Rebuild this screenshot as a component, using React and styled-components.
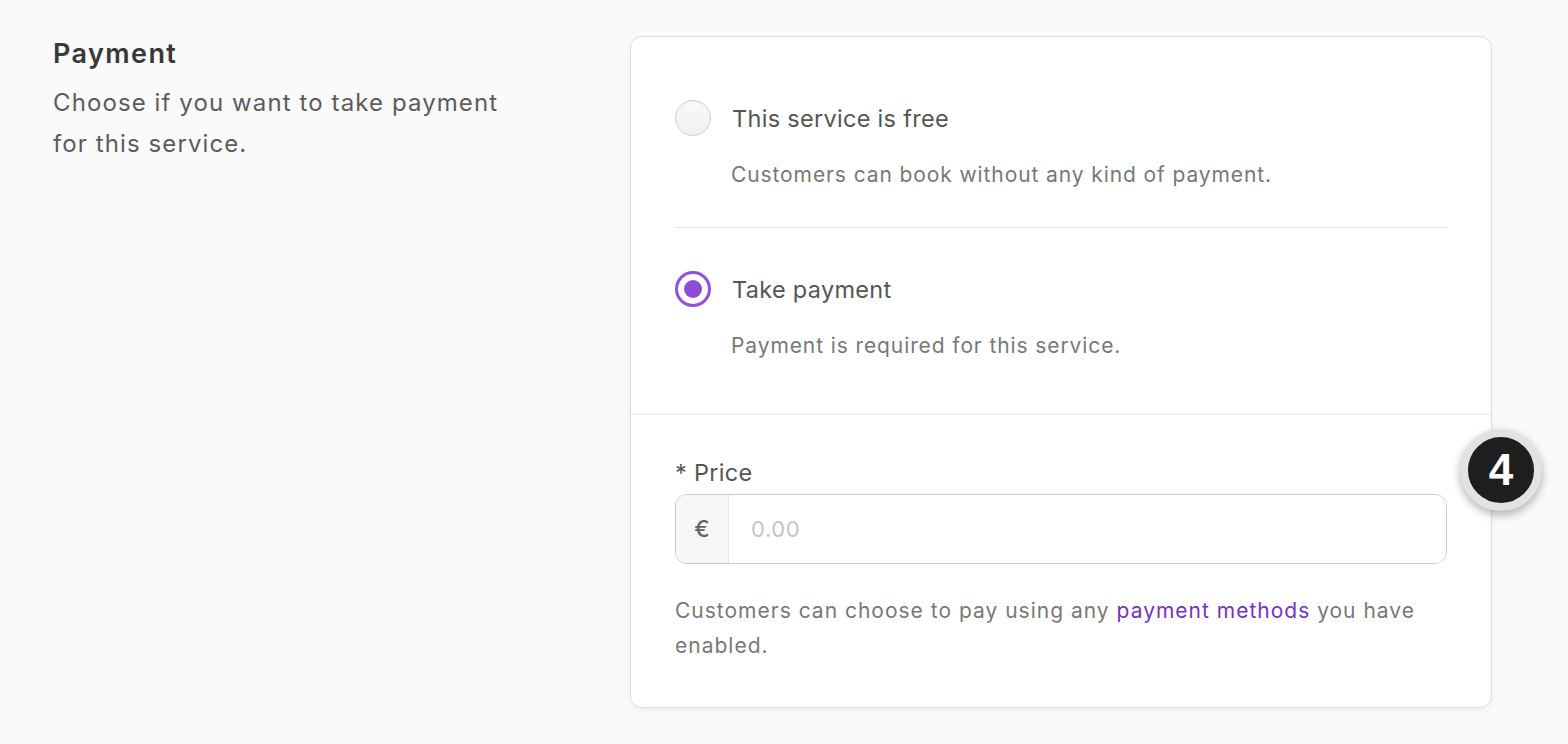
import styled, { createGlobalStyle } from "styled-components"

const Global = createGlobalStyle`
  html, body {
    margin: 0;
    padding: 0;
    background: #fafafa;
    font-family: Inter, "Noto Sans", sans-serif;
  }
`;

const App = () => {
    return (
        <>
            <Global />
            <Page>
                <Intro>
                    <Heading>Payment</Heading>
                    <Lead>Choose if you want to take payment for this service.</Lead>
                </Intro>
                <CardWrap>
                    <Card>
                        <Options>
                            <Option>
                                <OptionHead>
                                    <Radio />
                                    <OptionTitle>This service is free</OptionTitle>
                                </OptionHead>
                                <OptionDesc>Customers can book without any kind of payment.</OptionDesc>
                            </Option>
                            <Divider />
                            <Option>
                                <OptionHead>
                                    <Radio checked />
                                    <OptionTitle>Take payment</OptionTitle>
                                </OptionHead>
                                <OptionDesc>Payment is required for this service.</OptionDesc>
                            </Option>
                        </Options>
                        <PriceSection>
                            <Label>* Price</Label>
                            <InputGroup>
                                <Addon>€</Addon>
                                <Input placeholder="0.00" />
                            </InputGroup>
                            <Help>
                                Customers can choose to pay using any <Link href="#">payment methods</Link> you have enabled.
                            </Help>
                        </PriceSection>
                    </Card>
                    <Badge>4</Badge>
                </CardWrap>
            </Page>
        </>
    )
};

const Page = styled.main`
    display: flex;
    align-items: flex-start;
    padding: 36px 0 0 53px;
    min-height: 744px;
    box-sizing: border-box;
`;

const Intro = styled.div`
    width: 577px;
    flex-shrink: 0;
    padding-right: 100px;
    box-sizing: border-box;
`;

const Heading = styled.h2`
    margin: 0;
    font-size: 27px;
    font-weight: 600;
    letter-spacing: 1.4px;
    color: #383838;
    line-height: 36px;
`;

const Lead = styled.p`
    margin: 10px 0 0;
    font-size: 24px;
    letter-spacing: 1.1px;
    line-height: 41px;
    color: #5c5c5c;
`;

const CardWrap = styled.div`
    position: relative;
    width: 862px;
`;

const Card = styled.section`
    background: #fff;
    border: 1px solid #dedede;
    border-radius: 12px;
    box-shadow: 0 2px 6px rgba(0, 0, 0, 0.05);
    overflow: hidden;
`;

const Options = styled.div`
    padding: 45px 44px 53px;
    border-bottom: 1px solid #ebebeb;
`;

const Option = styled.div`
    display: flex;
    flex-direction: column;
`;

const OptionHead = styled.div`
    display: flex;
    align-items: center;
    gap: 21px;
    height: 72px;
`;

const Radio = styled.span`
    width: 36px;
    height: 36px;
    box-sizing: border-box;
    border-radius: 50%;
    flex-shrink: 0;
    border: ${(p) => (p.checked ? "3px solid #9550d9" : "1px solid #cfcfcf")};
    background: ${(p) => (p.checked ? "#fff" : "linear-gradient(#fafafa, #f0f0f0)")};
    box-shadow: ${(p) => (p.checked ? "none" : "inset 0 1px 2px rgba(0,0,0,0.05)")};
    display: flex;
    align-items: center;
    justify-content: center;

    &::after {
        content: "";
        display: ${(p) => (p.checked ? "block" : "none")};
        width: 18px;
        height: 18px;
        border-radius: 50%;
        background: #8e4dd6;
    }
`;

const OptionTitle = styled.span`
    font-size: 23.5px;
    letter-spacing: 0.3px;
    color: #555;
`;

const OptionDesc = styled.p`
    margin: 6px 0 0 56px;
    font-size: 21px;
    letter-spacing: 0.9px;
    line-height: 30px;
    color: #787878;
`;

const Divider = styled.hr`
    border: 0;
    border-top: 1px solid #e4e4e4;
    margin: 37px 0 25px;
`;

const PriceSection = styled.div`
    padding: 41px 44px 44px;
`;

const Label = styled.label`
    display: block;
    font-size: 23.5px;
    letter-spacing: 0.3px;
    line-height: 34px;
    color: #555;
    margin-bottom: 4px;
`;

const InputGroup = styled.div`
    display: flex;
    height: 70px;
    border: 1px solid #c9c9c9;
    border-radius: 12px;
    overflow: hidden;
    box-sizing: border-box;
`;

const Addon = styled.span`
    width: 52px;
    flex-shrink: 0;
    display: flex;
    align-items: center;
    justify-content: center;
    background: #f7f7f7;
    border-right: 1px solid #e6e6e6;
    font-size: 23px;
    font-weight: 500;
    color: #666;
`;

const Input = styled.input`
    flex: 1;
    border: 0;
    outline: none;
    padding: 0 22px;
    font-family: inherit;
    font-size: 22px;
    letter-spacing: 0.6px;
    color: #333;
    background: #fff;

    &::placeholder {
        color: #c4c4c4;
    }
`;

const Help = styled.p`
    margin: 29px 0 0;
    font-size: 21px;
    letter-spacing: 1px;
    line-height: 35px;
    color: #787878;
`;

const Link = styled.a`
    color: #7a2fc8;
    text-decoration: none;
`;

const Badge = styled.div`
    position: absolute;
    top: 393px;
    right: -50px;
    width: 82px;
    height: 82px;
    box-sizing: border-box;
    border-radius: 50%;
    background: #1e1e1e;
    border: 8px solid #e2e2e2;
    box-shadow: 0 4px 10px rgba(0, 0, 0, 0.3);
    color: #fff;
    font-size: 44px;
    font-weight: 800;
    display: flex;
    align-items: center;
    justify-content: center;
    font-family: "Liberation Sans", Arial, sans-serif;
`;

export default App
